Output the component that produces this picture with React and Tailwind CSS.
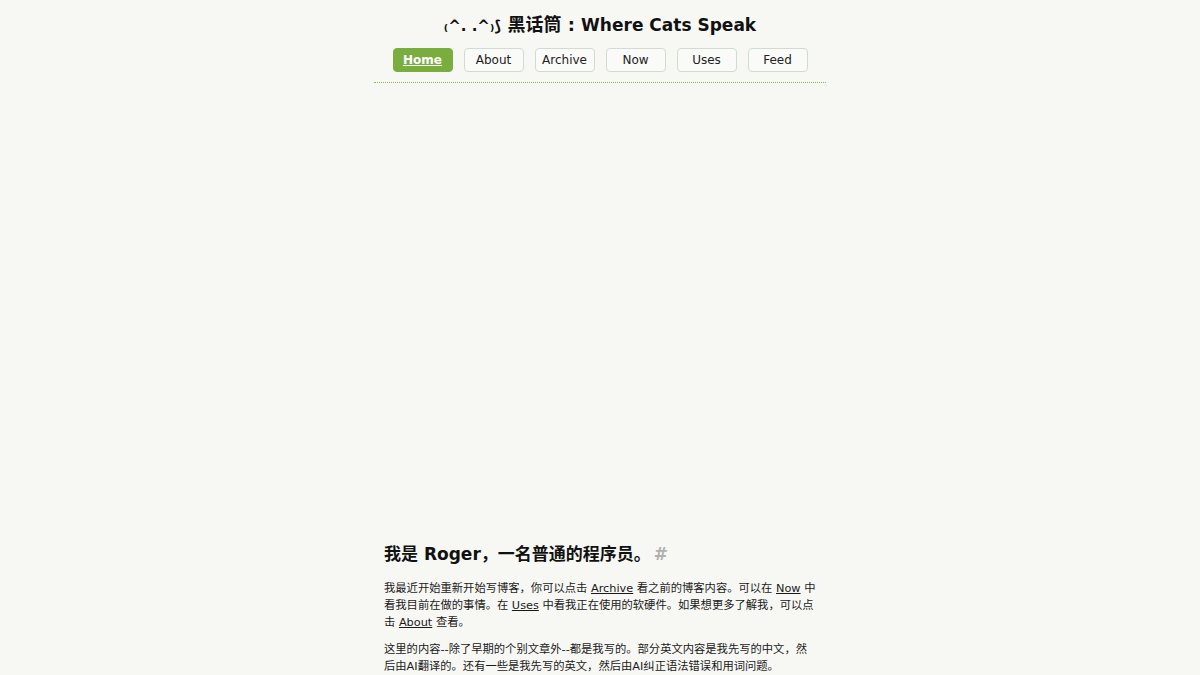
import React from "react";

const font = { fontFamily: '"DejaVu Sans", "Noto Sans CJK SC", sans-serif' };

const navItems = ["Home", "About", "Archive", "Now", "Uses", "Feed"];

function NavButton({ label, active }) {
  if (active) {
    return (
      <a className="w-[60px] h-[24px] flex items-center justify-center rounded-[4px] bg-[#79ad3e] border border-[#79ad3e] text-white font-bold text-[12px] underline">
        {label}
      </a>
    );
  }
  return (
    <a className="w-[60px] h-[24px] flex items-center justify-center rounded-[4px] bg-[#fafbf8] border border-[#cfdccf] text-[#222] text-[12px]">
      {label}
    </a>
  );
}

export default function App() {
  return (
    <div className="min-h-screen bg-[#f7f8f4] text-[#111]" style={font}>
      <div className="w-[452px] mx-auto">
        {/* Header */}
        <header className="pt-[13px] pb-[10px] border-b border-dotted border-[#8dbd4f]">
          <h1 className="text-center text-[18px] font-bold leading-[24px]">
            <span className="text-[15px]">₍^. .^₎⟆</span> 黑话筒 : <span className="text-[17px]">Where Cats Speak</span>
          </h1>
          <nav className="flex justify-center gap-[11px] mt-[10px]">
            {navItems.map((item) => (
              <NavButton key={item} label={item} active={item === "Home"} />
            ))}
          </nav>
        </header>

        {/* Hero area (empty) */}
        <div className="h-[459px]" />

        {/* Intro */}
        <section className="px-[10px]">
          <h2 className="text-[17px] font-bold leading-[24px]">
            我是 Roger，一名普通的程序员。
            <span className="ml-[3px] text-[#b0b0b0]">#</span>
          </h2>
          <p className="mt-[14px] text-[11.3px] leading-[17px] text-[#1a1a1a]">
            我最近开始重新开始写博客，你可以点击 <a className="underline">Archive</a> 看之前的博客内容。可以在 <a className="underline">Now</a> 中看我目前在做的事情。在 <a className="underline">Uses</a> 中看我正在使用的软硬件。如果想更多了解我，可以点击 <a className="underline">About</a> 查看。
          </p>
          <p className="mt-[10px] text-[11.3px] leading-[17px] text-[#1a1a1a]">
            这里的内容--除了早期的个别文章外--都是我写的。部分英文内容是我先写的中文，然后由AI翻译的。还有一些是我先写的英文，然后由AI纠正语法错误和用词问题。
          </p>
        </section>
      </div>
    </div>
  );
}
